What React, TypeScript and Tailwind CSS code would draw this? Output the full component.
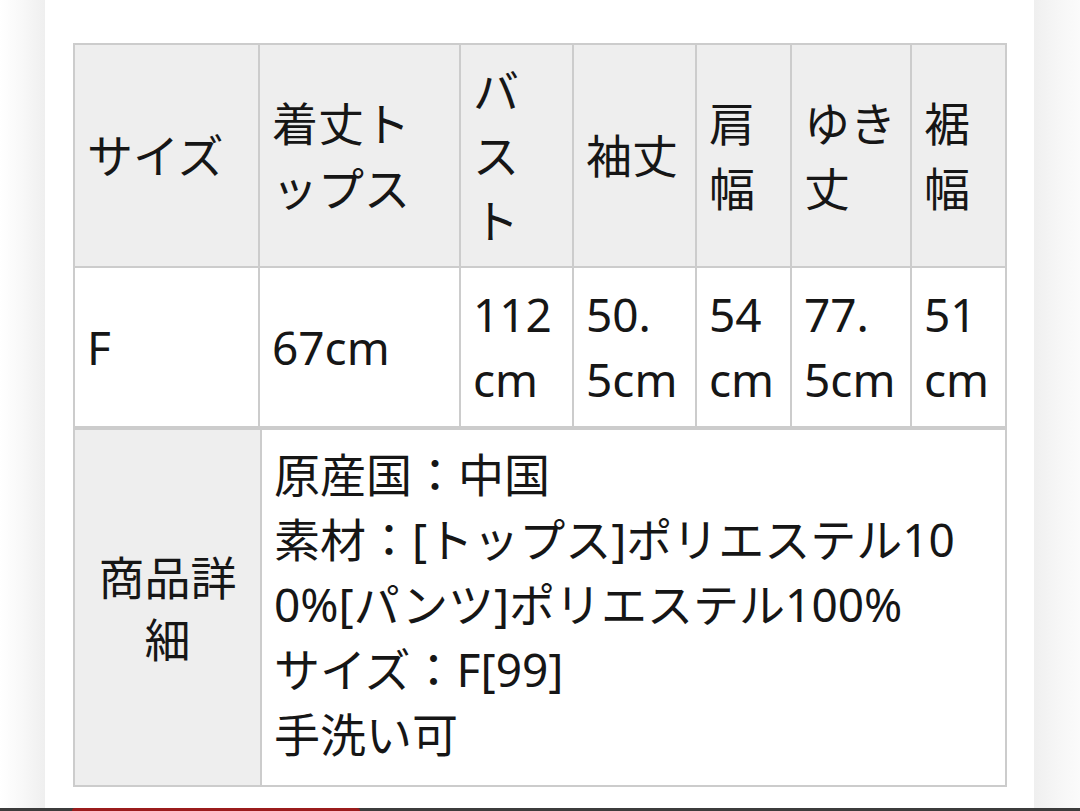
import React from "react";

const font = {
  fontFamily: '"Noto Sans", "Noto Sans CJK JP", sans-serif',
};

function HCell({ children }: { children: React.ReactNode }) {
  return (
    <div className="bg-[#eeeeee] flex items-center pl-[12px] whitespace-nowrap leading-[65px]">
      <div>{children}</div>
    </div>
  );
}

function DCell({ children }: { children: React.ReactNode }) {
  return (
    <div className="bg-white flex items-center pl-[12px] whitespace-nowrap leading-[65px]">
      <div>{children}</div>
    </div>
  );
}

export default function App() {
  return (
    <div
      className="w-[1080px] h-[811px] bg-white flex flex-col overflow-hidden text-[46px] font-normal text-[#161616]"
      style={font}
    >
      <div className="flex flex-1">
        <div className="w-[45px] bg-gradient-to-r from-white via-[#f8f8f8] to-[#efefef]" />
        <div className="flex-1 bg-white pt-[43px] pl-[28px]">
          <div className="w-[934px] grid grid-cols-[183px_199px_111px_121px_93px_118px_93px] grid-rows-[221px_158px] gap-[2px] p-[2px] bg-[#cccccc]">
            <HCell>サイズ</HCell>
            <HCell>
              着丈ト
              <br />
              ップス
            </HCell>
            <HCell>
              バ
              <br />
              ス
              <br />ト
            </HCell>
            <HCell>袖丈</HCell>
            <HCell>
              肩
              <br />
              幅
            </HCell>
            <HCell>
              ゆき
              <br />
              丈
            </HCell>
            <HCell>
              裾
              <br />
              幅
            </HCell>
            <DCell>F</DCell>
            <DCell>67cm</DCell>
            <DCell>
              112
              <br />
              cm
            </DCell>
            <DCell>
              50.
              <br />
              5cm
            </DCell>
            <DCell>
              54
              <br />
              cm
            </DCell>
            <DCell>
              77.
              <br />
              5cm
            </DCell>
            <DCell>
              51
              <br />
              cm
            </DCell>
          </div>
          <div className="w-[934px] grid grid-cols-[185px_743px] grid-rows-[355px] gap-[2px] p-[2px] bg-[#cccccc]">
            <div className="bg-[#eeeeee] flex items-center justify-center text-center leading-[62px] whitespace-nowrap">
              <div>
                商品詳
                <br />
                細
              </div>
            </div>
            <div className="bg-white pl-[12px] pt-[12px] leading-[65px] whitespace-nowrap">
              原産国：中国
              <br />
              素材：[トップス]ポリエステル10
              <br />
              0%[パンツ]ポリエステル100%
              <br />
              サイズ：F[99]
              <br />
              手洗い可
            </div>
          </div>
        </div>
        <div className="w-[46px] bg-gradient-to-r from-[#efefef] via-[#f6f6f6] to-[#fbfbfb]" />
      </div>
      <div className="h-[3px] bg-[#3c3c3c] flex">
        <div className="ml-[72px] w-[288px] bg-[#9b1c1c] rounded-t-[3px]" />
      </div>
    </div>
  );
}
